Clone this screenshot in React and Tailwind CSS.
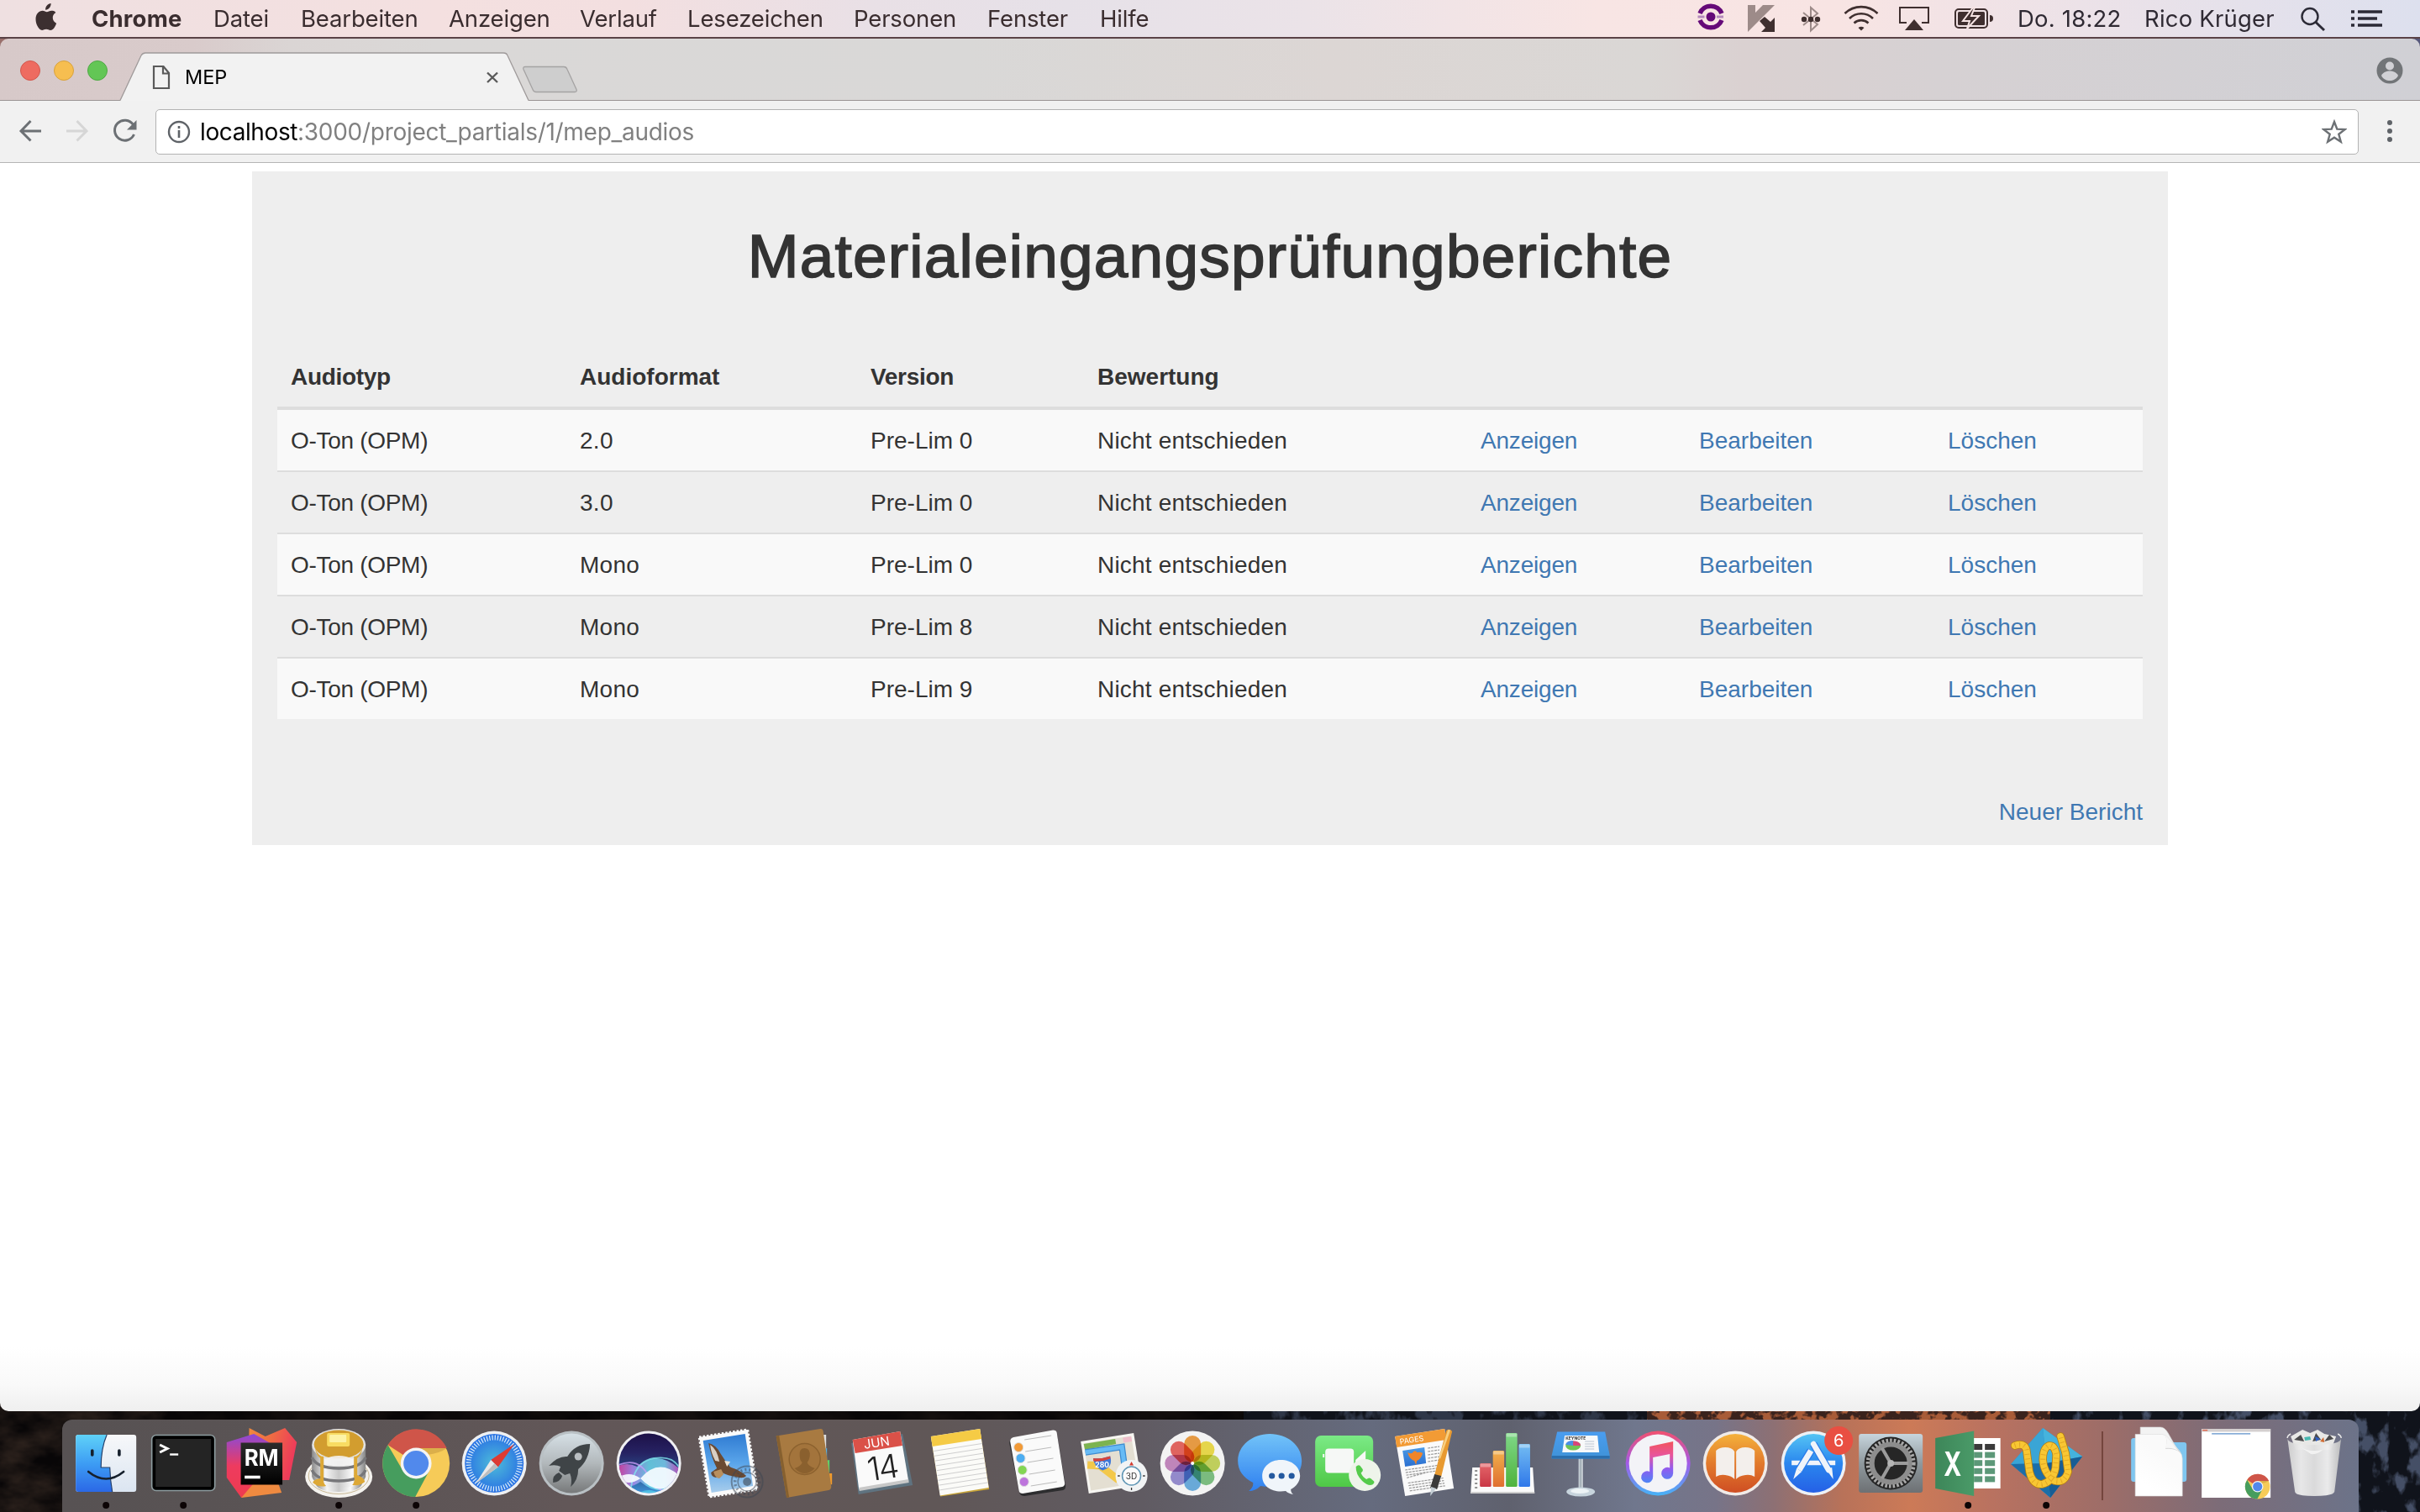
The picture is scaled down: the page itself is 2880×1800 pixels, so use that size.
import React from "react";

const INTER = "font-['Inter','Noto_Sans',sans-serif]";

/* ---------- menu bar ---------- */

const menuItems = [
  ["Datei", "w-[104px]"],
  ["Bearbeiten", "w-[176px]"],
  ["Anzeigen", "w-[156px]"],
  ["Verlauf", "w-[128px]"],
  ["Lesezeichen", "w-[198px]"],
  ["Personen", "w-[159px]"],
  ["Fenster", "w-[134px]"],
  ["Hilfe", "w-[80px]"],
];

function AppleLogo() {
  return (
    <svg className="h-[32px] w-[26px]" viewBox="0 0 26 32">
      <path
        fill="#3c2f30"
        d="M18.6 0c.2 2-.6 3.9-1.7 5.300-1.200 1.500-3 2.500-4.800 2.400-.2-1.900.7-3.900 1.800-5.200C15.100 1.100 17 .1 18.600 0zM24.300 10.900c-.2.100-3.600 2.100-3.500 6.200 0 4.900 4.200 6.500 4.300 6.600 0 .1-.7 2.400-2.200 4.700-1.400 2-2.800 3.500-4.900 3.500-2 0-2.700-1.200-5-1.200s-3.100 1.200-5 1.200c-2 0-3.500-1.800-4.900-3.800C1.300 25.500.500 21.700.500 18.600c0-6 4-9.800 8.100-9.800 2.100 0 3.900 1.400 5.200 1.400 1.200 0 3.200-1.500 5.600-1.500.9 0 4.100.1 4.900 2.200z"
      />
    </svg>
  );
}

function StatusIcons() {
  return (
    <svg className="h-[44px] w-[380px]" viewBox="2000 0 380 44">
      <g fill="none" stroke="#650a78" strokeWidth="5.500">
        <path d="M2023 16a14 14 0 0 1 26 0M2023 24a14 14 0 0 0 26 0" />
      </g>
      <circle cx="2036" cy="20" r="5.500" fill="#650a78" />
      <path d="M2020.500 20h8M2043 20h8" stroke="#b48abb" strokeWidth="3" />
      <path d="M2080 6h9v9l9-9h14l-32 32z" fill="#9d8b89" />
      <path d="M2094 25l6-5 7 6 5-5v17h-16l5-5z" fill="#3f2f2f" />
      <path d="M2146 15l17 14-8 7.500V9l8 7-17 14" fill="none" stroke="#9d8b89" strokeWidth="2" />
      <g fill="#3f2f2f">
        <circle cx="2147" cy="23" r="3.200" />
        <circle cx="2155" cy="23" r="3.200" />
        <circle cx="2163" cy="23" r="3.200" />
      </g>
      <g fill="none" stroke="#3f2f2f" strokeWidth="2.600">
        <path d="M2195.500 16a28 28 0 0 1 39 0" />
        <path d="M2201 22a20 20 0 0 1 28 0" />
        <path d="M2206.500 27.500a12.500 12.500 0 0 1 17 0" />
      </g>
      <path d="M2211.500 33a5 4 0 0 1 7 0l-3.500 3.500z" fill="#3f2f2f" />
      <path d="M2269 27h-8V9h34v18h-8" fill="none" stroke="#3f2f2f" strokeWidth="2" />
      <path d="M2278 23l11 13h-22z" fill="#3f2f2f" />
      <rect x="2327" y="11" width="38" height="22" rx="4" fill="none" stroke="#3f2f2f" strokeWidth="2" />
      <rect x="2330" y="14" width="32" height="16" rx="1.500" fill="#3f2f2f" />
      <path d="M2368 18q4 0 4 4t-4 4z" fill="#3f2f2f" />
      <path d="M2348 9l-12 16h8l-3 9 14-15h-9l4-10z" fill="#3f2f2f" stroke="#f6e4e4" strokeWidth="2" />
    </svg>
  );
}

function MenuBar() {
  return (
    <div
      className={`flex h-[46px] items-center border-b-2 border-[#5a4246] bg-[linear-gradient(90deg,#efe0e1_0%,#f4e0e0_18%,#f3dfe0_26%,#e9e0e6_36%,#e6e1e8_44%,#ebe3e8_54%,#f8e5e4_66%,#f8e4e3_76%,#ece2e8_86%,#dde0ee_100%)] pl-[42px] text-[27.5px] text-[#3a2d2f] ${INTER}`}
    >
      <div className="flex h-full w-[67px] items-start pt-[4px]">
        <AppleLogo />
      </div>
      <div className="w-[145px] whitespace-nowrap pt-px font-bold tracking-[0.2px]">Chrome</div>
      {menuItems.map(([label, width]) => (
        <div key={label} className={`shrink-0 whitespace-nowrap pt-px tracking-[-0.15px] ${width}`}>
          {label}
        </div>
      ))}
      <div className="flex-1" />
      <StatusIcons />
      <div className="w-[151px] shrink-0 whitespace-nowrap pl-[21px] pt-px tracking-[0.2px] text-[#2f2a33]">
        <span className="whitespace-nowrap">Do. 18:22</span>
      </div>
      <div className="w-[188px] shrink-0 whitespace-nowrap pl-[21px] pt-px tracking-[0.2px] text-[#2f2a33]">Rico Krüger</div>
      <svg className="h-[44px] w-[161px] shrink-0" viewBox="2719 0 161 44">
        <circle cx="2749" cy="19.500" r="9.500" fill="none" stroke="#2b2a36" strokeWidth="2.400" />
        <path d="M2756 26.500l10 9.500" stroke="#2b2a36" strokeWidth="3" />
        <path
          d="M2798 14h4M2798 22h4M2798 30h4M2806 14h29M2806 22h23M2806 30h29"
          stroke="#2b2a36"
          strokeWidth="3.600"
        />
      </svg>
    </div>
  );
}

/* ---------- browser chrome ---------- */

function TabStrip() {
  return (
    <div className="bg-[linear-gradient(90deg,#9a706c_0%,#55343a_10%,#55343a_90%,#56587c_100%)]">
      <div className="relative flex h-[74px] items-start rounded-t-[10px] bg-[linear-gradient(90deg,#d7c9c9_0%,#d9cbcb_8%,#dad5d4_12%,#dad8d7_18%,#d9d8d7_40%,#dcd6d4_55%,#dad7d5_68%,#dad1d1_72%,#d6d1d3_80%,#d0d0d5_100%)] shadow-[inset_0_-1px_0_#9a9494]">
        <svg className="h-[74px] w-[700px]" viewBox="0 46 700 74">
          <circle cx="36" cy="84" r="11.500" fill="#ee6b60" stroke="#d2574d" />
          <circle cx="76" cy="84" r="11.500" fill="#f6be50" stroke="#d8a23c" />
          <circle cx="116" cy="84" r="11.500" fill="#63c655" stroke="#4fa845" />
          <path d="M143 120L168 66q2-3 5-3h426q4 0 5 3l25 54z" fill="#f2f2f2" />
          <path d="M143 119.500L168 66q2-3 5-3h426q4 0 5 3l25 53.500" fill="none" stroke="#9f9a9a" strokeWidth="1.300" />
          <path d="M183 79h11.500l6.500 8v18h-18zM194 79v8.500h7" fill="none" stroke="#5a5a5a" strokeWidth="2.200" />
          <path d="M580 86.500l12 11.500M592 86.500L580 98" stroke="#5a5a5a" strokeWidth="2.400" />
          <path d="M625 79.500h46q3 0 4 3l11 24q1 3-2 3h-46q-3 0-4-3l-11-24q-1-3 2-3z" fill="#cecece" stroke="#a5a3a3" strokeWidth="1.300" />
          <text x="220" y="99.500" fontSize="23.500" letterSpacing="-0.1" fill="#000" fontFamily="Inter, sans-serif">
            MEP
          </text>
        </svg>
        <div className="flex-1" />
        <svg className="mr-[20px] mt-[22px] h-[32px] w-[32px]" viewBox="0 0 32 32">
          <circle cx="16" cy="16" r="15.500" fill="#727578" />
          <circle cx="16" cy="10.500" r="5" fill="#d1d1d5" />
          <path d="M6 22c2-4 6-5.500 10-5.500s8 1.500 10 5.500c-2 4-6 6-10 6s-8-2-10-6z" fill="#d1d1d5" />
        </svg>
      </div>
    </div>
  );
}

function Toolbar() {
  return (
    <div className="flex h-[74px] items-center border-b border-[#b5b5b5] bg-[#f1f1f1]">
      <svg className="h-[74px] w-[185px] shrink-0" viewBox="0 120 185 74">
        <path d="M49 156H25M36.500 144L25 156l11.500 11.500" fill="none" stroke="#6c7074" strokeWidth="3" />
        <path d="M79 156h24M91.500 144L103 156l-11.500 11.500" fill="none" stroke="#d6d6d6" strokeWidth="3" />
        <path d="M158.500 148.500a12 12 0 1 0 1 11.500" fill="none" stroke="#6c7074" strokeWidth="3" />
        <path d="M162.500 143v11.500H151z" fill="#6c7074" />
      </svg>
      <div
        className={`flex h-[54px] flex-1 items-center rounded-[5px] border border-[#b3b3b3] bg-white text-[28px] leading-[34px] text-[#808080] ${INTER}`}
      >
        <svg className="ml-[13px] h-[28px] w-[28px] shrink-0" viewBox="0 0 28 28">
          <circle cx="14" cy="14" r="12" fill="none" stroke="#5f6368" strokeWidth="2.400" />
          <path d="M14 12v9M14 7v3" stroke="#5f6368" strokeWidth="2.600" />
        </svg>
        <div className="ml-[11px] whitespace-nowrap tracking-[-0.28px]">
          <span className="tracking-[-0.4px] text-black">localhost</span>:3000/project_partials/1/mep_audios
        </div>
        <div className="flex-1" />
        <svg className="mr-[13px] h-[30px] w-[30px]" viewBox="0 0 30 30">
          <path
            d="M15 3l3.300 8.600 9.200.5-7.200 5.700 2.500 9-7.800-5.100-7.800 5.100 2.500-9-7.200-5.700 9.200-.5z"
            fill="none"
            stroke="#6c7074"
            strokeWidth="2.400"
          />
        </svg>
      </div>
      <svg className="h-[74px] w-[73px] shrink-0" viewBox="2807 120 73 74">
        <circle cx="2844" cy="146" r="3" fill="#5f6368" />
        <circle cx="2844" cy="156" r="3" fill="#5f6368" />
        <circle cx="2844" cy="166" r="3" fill="#5f6368" />
      </svg>
    </div>
  );
}

/* ---------- page ---------- */

const rows = [
  ["2.0", "Pre-Lim 0"],
  ["3.0", "Pre-Lim 0"],
  ["Mono", "Pre-Lim 0"],
  ["Mono", "Pre-Lim 8"],
  ["Mono", "Pre-Lim 9"],
];

const columns = "grid grid-cols-[344px_346px_270px_456px_260px_296px_248px]";

function Report() {
  return (
    <div className="mx-auto mt-[9px] h-[802px] w-[2280px] bg-[#eeeeee] px-[30px] font-['Liberation_Sans',Arial,sans-serif] text-[28px] leading-[40px] text-[#333333]">
      <h1 className="pt-[61px] text-center text-[73px] leading-[80px] tracking-[1.2px] [-webkit-text-stroke:1.6px_#333]">
        Materialeingangsprüfungberichte
      </h1>
      <div className={`mt-[67px] h-[76px] border-b-4 border-[#dddddd] pt-[17px] font-bold ${columns}`}>
        <div className="pl-[16px] tracking-[-0.3px]">Audiotyp</div>
        <div className="pl-[16px]">Audioformat</div>
        <div className="pl-[16px] tracking-[-0.3px]">Version</div>
        <div className="pl-[16px]">Bewertung</div>
      </div>
      <div className="flex flex-col gap-[2px] bg-[#dddddd]">
        {rows.map(([format, version], i) => (
          <div key={i} className={`h-[72px] pt-[17px] ${columns} ${i % 2 === 0 ? "bg-[#f9f9f9]" : "bg-[#eeeeee]"}`}>
            <div className="pl-[16px] tracking-[-0.3px]">O-Ton (OPM)</div>
            <div className="pl-[16px] tracking-[0.3px]">{format}</div>
            <div className="pl-[16px]">{version}</div>
            <div className="pl-[16px] tracking-[0.2px]">Nicht entschieden</div>
            <a className="pl-[16px] tracking-[-0.2px] text-[#4078b2]">Anzeigen</a>
            <a className="pl-[16px] text-[#4078b2]">Bearbeiten</a>
            <a className="pl-[16px] text-[#4078b2]">Löschen</a>
          </div>
        ))}
      </div>
      <div className="pt-[91px] text-right text-[#4078b2]">Neuer Bericht</div>
    </div>
  );
}

/* ---------- dock icons ---------- */

function Grad({ id, stops, x2 = 0, y2 = 1 }) {
  return (
    <linearGradient id={id} x1="0" y1="0" x2={x2} y2={y2}>
      {stops.map((c, i) => (
        <stop key={i} offset={i / (stops.length - 1)} stopColor={c} />
      ))}
    </linearGradient>
  );
}

const sans = "Inter, sans-serif";

const Finder = () => (
  <>
    <Grad id="fi1" stops={["#5fd2f8", "#3d9df4", "#2b68e6"]} />
    <Grad id="fi2" stops={["#f7f8fa", "#dbe5f1"]} />
    <rect x="10" y="18" width="72" height="68" rx="3" fill="url(#fi2)" />
    <path d="M13 18H47Q40 34 40 57H50.500Q51 72 53.500 86H13a3 3 0 0 1-3-3V21a3 3 0 0 1 3-3z" fill="url(#fi1)" />
    <path d="M47 18Q40 34 40 57H50.500Q51 72 53.500 86" fill="none" stroke="#24406b" strokeWidth="1.200" />
    <path d="M29.600 37v5M61.700 37v5" stroke="#16202c" strokeWidth="3.600" strokeLinecap="round" />
    <path d="M25 62q21 17 42 0" fill="none" stroke="#16202c" strokeWidth="2.600" strokeLinecap="round" />
  </>
);

const Terminal = () => (
  <>
    <rect x="8.500" y="18.500" width="75" height="66" rx="5" fill="#000" stroke="#8d9c9f" strokeWidth="1.600" />
    <rect x="13" y="23" width="66" height="57" fill="#242424" />
    <path d="M18 30l9 4.500-9 4.500" fill="none" stroke="#fff" strokeWidth="3" />
    <path d="M30 41.500h10" stroke="#fff" strokeWidth="2.400" />
  </>
);

const RubyMine = () => (
  <>
    <Grad id="rm1" stops={["#8a4ad8", "#ee3b5f", "#ee3b4f"]} />
    <Grad id="rm2" x2={1} y2={0.3} stops={["#f08a3c", "#ee6a44", "#ee3b5a"]} />
    <Grad id="rm3" stops={["#2b2b2b", "#000"]} />
    <path d="M31.400 10L50.600 20 74 10 88 27 79 72H60L31 30z" fill="url(#rm2)" />
    <path d="M4.600 27L37 17 60 30V80L22 93 4.600 69z" fill="url(#rm1)" />
    <path d="M22 93L40 72 66 76 70 87z" fill="#ef8a40" />
    <rect x="21.400" y="27.500" width="49.500" height="50" fill="url(#rm3)" />
    <text x="25.500" y="54.500" fontSize="27.500" fontWeight="700" fill="#fff" textLength="41" lengthAdjust="spacingAndGlyphs" fontFamily={sans}>
      RM
    </text>
    <path d="M26 68.500h18.500" stroke="#fff" strokeWidth="3.600" />
  </>
);

const Pancakes = () => (
  <>
    <Grad id="pc1" x2={1} y2={0} stops={["#8b8b8b", "#f5f5f5", "#c9c9c9", "#fafafa", "#858585"]} />
    <ellipse cx="46" cy="68" rx="40" ry="25" fill="#f4f2ee" />
    <ellipse cx="46" cy="67" rx="36" ry="21.500" fill="none" stroke="#c9b894" strokeWidth="1" />
    <path d="M18 62v12q0 12 28 12t28-12V62z" fill="url(#pc1)" />
    <path d="M14 30v38q4 13 32 13t32-13V30z" fill="url(#pc1)" />
    <path d="M14 45q6 13 32 13t32-13M14 60q6 13 32 13t32-13" fill="none" stroke="#77777a" strokeWidth="3.400" />
    <ellipse cx="46" cy="30" rx="32" ry="19" fill="#e2e2e2" />
    <ellipse cx="46" cy="29.500" rx="29.500" ry="17" fill="#d29d2f" />
    <path d="M18 35q4 9 10 9v28q-2 4-4 0V46q-5-4-6-11zM74 35q-4 9-10 9v24q2 4 4 0V46q5-4 6-11z" fill="#dda836" />
    <path d="M24 70q-8 1-9 5 7 6 16 4-4-3-3-9zM68 66q8 3 9 8-5 5-15 4 4-4 2-12z" fill="#dda836" />
    <path d="M29 47q8-4 17-4t17 4v5q-17 7-34 0z" fill="#f3f3f3" opacity=".9" />
    <rect x="32" y="16" width="27" height="16" rx="2" fill="#f8dc62" />
    <rect x="35" y="18" width="20" height="9" rx="1" fill="#fdf3a6" />
  </>
);

const ChromeBall = () => (
  <>
    <circle cx="46" cy="52" r="40" fill="#f6cb58" />
    <path d="M46 52L12.500 30.200A40 40 0 0 1 82.500 34H46z" fill="#cf5549" />
    <path d="M12.500 30.200A40 40 0 0 0 45 92L61.600 61 30.400 61z" fill="#469d5e" />
    <path d="M46 34h36.500q-8 6-24 8z" fill="#8d5a20" opacity=".25" />
    <circle cx="46" cy="52" r="18.400" fill="#f4f4f4" />
    <circle cx="46" cy="52" r="15" fill="#5189ec" />
  </>
);

const Safari = () => (
  <>
    <radialGradient id="sf">
      <stop offset="0" stopColor="#4dbcd9" />
      <stop offset="1" stopColor="#2a72e4" />
    </radialGradient>
    <circle cx="46" cy="52" r="38.500" fill="#eef0f2" />
    <circle cx="46" cy="52" r="35" fill="url(#sf)" />
    <circle cx="46" cy="52" r="30.500" fill="none" stroke="#d8ebfb" strokeWidth="6" strokeDasharray="1.200 2" />
    <path d="M70 29L50.500 56.500 42 48z" fill="#dd3b33" />
    <path d="M24 76L42 48l8.500 8.500z" fill="#e9e9e9" />
    <path d="M24 76l22.300-23.700 4.200 4.200z" fill="#bdbdbd" />
  </>
);

const Launchpad = () => (
  <>
    <Grad id="lp" stops={["#d6e0e6", "#b2b8bb", "#77797a"]} />
    <circle cx="46" cy="52" r="38.500" fill="#b9c0c4" />
    <circle cx="46" cy="52" r="35.500" fill="url(#lp)" />
    <path
      fill="#3f4447"
      d="M68 29q-18 0-27 15-11-1-22 11 8-2 14 1l-2 5 7 5 6-2q3 7 1 16 9-8 9-21 13-11 14-30z"
    />
    <circle cx="54" cy="44" r="4.500" fill="#b9bec1" />
    <path d="M31 63q-8 3-7 12 9-1 11-8z" fill="#3f4447" />
  </>
);

const Siri = () => (
  <>
    <Grad id="si1" stops={["#1c0f45", "#262262", "#2a4f8a", "#3f9be0"]} />
    <Grad id="si2" x2={1} y2={0} stops={["#f03a9c", "#b58af0", "#6fe0ee", "#7fd8f5", "#e03fc0"]} />
    <clipPath id="sic">
      <circle cx="46" cy="52" r="35.500" />
    </clipPath>
    <circle cx="46" cy="52" r="38.500" fill="#f0f0f3" />
    <g clipPath="url(#sic)">
      <rect x="8" y="14" width="76" height="76" fill="url(#si1)" />
      <path d="M8 56Q20 50 32 56 56 34 84 60V76Q60 94 36 74 22 84 8 76z" fill="url(#si2)" opacity=".8" />
      <path d="M24 90Q26 50 52 46T84 62" fill="none" stroke="#7fe6ee" strokeWidth="1.800" opacity=".8" />
      <path d="M10 54Q34 44 46 68T84 84" fill="none" stroke="#c79cf7" strokeWidth="1.800" opacity=".8" />
      <path d="M8 70Q22 60 36 70 58 44 84 68 60 96 36 70 22 80 8 70z" fill="#f6fcff" opacity=".92" />
      <path d="M30 90q16-12 32 0z" fill="#5fe0f0" opacity=".6" />
    </g>
  </>
);

const Mail = () => (
  <>
    <Grad id="ml" stops={["#2f7bd2", "#5aa5ea", "#a8cdec"]} />
    <path d="M13 21L70.500 12 82 83 25 92z" fill="#fafafa" stroke="#fafafa" strokeWidth="3" strokeDasharray="2.500 2" />
    <path d="M17.500 25L67.500 17 77 79 27.500 87z" fill="url(#ml)" />
    <path d="M24 28q9 2 14 12l6 9 4 2q-1 4 3 6 10 3 18 10-4 4-12 1-10-1-17-5l-7 6q-6-1-6-6l7-5q-7-14-10-30z" fill="#6b4a32" />
    <path d="M26 30q8 5 11 20l-5-1q-5-9-6-19z" fill="#d9cfc4" />
    <path d="M43 49l7 1-4 6z" fill="#f0e6d6" />
    <path d="M30 62l9-3 3 6-5 5q-5 0-7-8z" fill="#b98f5e" />
    <g fill="none" stroke="#3d4652" opacity=".5">
      <circle cx="70" cy="74" r="18.500" strokeWidth="2" />
      <circle cx="70" cy="74" r="11" strokeWidth="1.500" />
      <circle cx="70" cy="74" r="14.500" strokeWidth="3.500" strokeDasharray="2 3" />
    </g>
    <circle cx="70" cy="74" r="5" fill="#3d4652" opacity=".6" />
  </>
);

const Contacts = () => (
  <>
    <path d="M66 18h6v17h-6z" fill="#dedede" />
    <path d="M69 35l4-1v15l-4 1z" fill="#53b4ea" />
    <path d="M71 49l5-1v15l-5 1z" fill="#5fd46a" />
    <path d="M73 64h6v13l-6 2z" fill="#f09a2c" />
    <path d="M12.500 19.500L65 11q3-.5 3.500 3L78 79q.5 4-3 5L25 93z" fill="#a87a41" />
    <path d="M12.500 19.500L16 19 28 92.500 25 93z" fill="#86602f" />
    <circle cx="46.500" cy="47" r="18.500" fill="#a3743c" stroke="#8c622f" strokeWidth="1.500" />
    <path d="M46.500 34q7 0 6 10-1 5-3 7 1 4 9 7-12 12-24 0 8-3 9-7-3-3-3-8-1-9 6-9z" fill="#8a602e" />
  </>
);

const Calendar = () => (
  <>
    <path d="M10 28L71 17 83 78 18.500 89z" fill="#5f7380" />
    <path d="M11.600 24L68 14 78 73 19 83z" fill="#fafafa" />
    <path d="M11.600 24L68 14 70.800 31 14.500 40z" fill="#da5148" />
    <path d="M19 81l59-10 .5 4L19.500 85z" fill="#c8c8c8" />
    <g transform="rotate(-9 46 52)" fontFamily={sans} textAnchor="middle">
      <text x="44" y="32" fontSize="15" fill="#fff">
        JUN
      </text>
      <text x="46" y="71" fontSize="39" fontWeight="300" letterSpacing="-2" fill="#222">
        14
      </text>
    </g>
  </>
);

const NotesIcon = () => (
  <>
    <path d="M11.700 21L70 11.500 81 83 23 91.500z" fill="#c9a63a" />
    <path d="M11.700 20L70 11 80.500 81 22.500 90.500z" fill="#fbfbf8" />
    <path d="M11.700 20L70 11 72 23 13.500 32z" fill="#f5cb45" />
    <g stroke="#cfcfcf" strokeWidth="1">
      {[0, 1, 2, 3, 4, 5, 6, 7, 8].map((i) => (
        <path key={i} d={`M${15 + i * 0.9} ${37.500 + i * 5.800}l57.500-9`} />
      ))}
    </g>
  </>
);

const Reminders = () => (
  <>
    <path d="M17 23L65 15q4 0 5 4l10 60q0 4-3 5L31 91q-5 0-6-4L13 28q0-4 4-5z" fill="#2d2d2f" />
    <path d="M18 21L65 12.500q4 0 4.500 3L79 76q0 3-3 4L29 88q-4 0-4.500-3L14 26q0-4 4-5z" fill="#fafafa" />
    {[
      [24, 33, "#f29a37"],
      [26.400, 46, "#4daef2"],
      [28.500, 60, "#83d653"],
      [30.600, 74, "#bd75dc"],
    ].map(([x, y, c]) => (
      <g key={c}>
        <circle cx={x} cy={y} r="5.500" fill={c} stroke="#ddd" />
        <path d={`M${x + 8} ${y + 5}l31-5`} stroke="#bbb" />
      </g>
    ))}
    <path d="M31 24l32-5" stroke="#bbb" />
  </>
);

const Maps = () => (
  <>
    <path d="M6 26L69 16 79 78 15.600 88z" fill="#f7f6f2" />
    <path d="M9.500 28.500L66 19.500 75.500 75 18 84.500z" fill="#e4dfd2" />
    <path d="M9.500 29L47 23l1 6L11 36z" fill="#7cb350" />
    <path d="M56 21.500l10-1.600 1 6-10 1.600z" fill="#efbecb" />
    <path d="M11.500 39L55 32.500 59 62" fill="none" stroke="#3e8cd0" strokeWidth="7.500" />
    <path d="M11.500 39L55 32.500 59 62" fill="none" stroke="#67bbf5" strokeWidth="5" />
    <path d="M14 54l15 1 22 17" fill="none" stroke="#f3c84b" strokeWidth="9" />
    <path d="M21 46q10 1 20-2.500 4 13-9 17-10-3-11-14.500z" fill="#3f79d8" />
    <path d="M21 46q10 1 20-2.500l.3 3q-10 4-20.300 3z" fill="#d5443c" />
    <text x="31.500" y="57" textAnchor="middle" fontSize="8.500" fontWeight="700" fill="#fff" fontFamily={sans}>
      280
    </text>
    <circle cx="66.400" cy="67" r="19" fill="#f1f3f4" />
    <circle cx="66.400" cy="67" r="11" fill="#fbfbfb" stroke="#5e95b4" strokeWidth="1.500" />
    <path d="M66.400 50l2.500 4.500h-5z" fill="#d23b30" />
    <path d="M66.400 81v3M50 67h2.500M80 67h2.500" stroke="#333" strokeWidth="1.300" />
    <text x="66.400" y="70.700" textAnchor="middle" fontSize="10" fill="#333" fontFamily={sans}>
      3D
    </text>
  </>
);

const petals = ["#f0952d", "#f0dc35", "#c2d44a", "#6fbc74", "#5aa8e0", "#8c82cf", "#c27cbb", "#e8544e"];

const Photos = () => (
  <>
    <circle cx="46" cy="52" r="38.500" fill="#f3f3f3" />
    {petals.map((c, i) => (
      <rect
        key={c}
        x="36"
        y="19"
        width="20"
        height="32"
        rx="10"
        fill={c}
        opacity=".88"
        className="mix-blend-multiply"
        transform={`rotate(${i * 45} 46 52)`}
      />
    ))}
    <circle cx="46" cy="52" r="2" fill="#fff" />
  </>
);

const Messages = () => (
  <>
    <Grad id="ms" stops={["#72c3f8", "#2f80f0"]} />
    <path d="M46 17c21 0 38 14 38 32S67 80 46 80q-6 0-11-1-6 6-14 6 6-5 5-10Q8 66 8 49C8 31 25 17 46 17z" fill="url(#ms)" />
    <path d="M59 48c13 0 23 8 23 19 0 7-5 13-11 16q0 4 3 6-6-1-9-4l-6 .5c-12 0-22-7-22-18s9-19.500 22-19.500z" fill="#f0f5fa" />
    <circle cx="48.500" cy="67" r="3.600" fill="#24599f" />
    <circle cx="60" cy="67" r="3.600" fill="#24599f" />
    <circle cx="72" cy="67" r="3.600" fill="#24599f" />
  </>
);

const FaceTime = () => (
  <>
    <Grad id="ft" stops={["#7bea86", "#4fc846"]} />
    <rect x="7" y="19" width="69" height="61" rx="7" fill="url(#ft)" />
    <rect x="19" y="34.500" width="34" height="29" rx="4" fill="#f6f8f6" />
    <path d="M55 48l12-11v15H55z" fill="#f6f8f6" />
    <path d="M17 41v4" stroke="#f6f8f6" strokeWidth="2" />
    <circle cx="66" cy="66" r="19" fill="#eef4ea" />
    <path
      d="M55.500 56q3-3 5-1l3 4q1 2-2 4.500 2 5 6.500 7.500 3-2.500 5-1l4 3.500q1 2-2 4-5 2-12-4.500-8-8-7.500-17z"
      fill="#55cb4b"
    />
  </>
);

const PagesIcon = () => (
  <>
    <Grad id="pg" stops={["#4d9be6", "#2a6fd0"]} />
    <path d="M10 20L69 11 80 82 22 91z" fill="#fafafa" />
    <path d="M10 20L69 11 71 24 12 33z" fill="#f29b35" />
    <text x="16" y="29.500" fontSize="9" fill="#fff" transform="rotate(-9 16 29)" fontFamily={sans}>
      PAGES
    </text>
    <path d="M19 37l26-4 2 19-25 4z" fill="url(#pg)" />
    <path d="M25 39q5 3 7-1 3-2 4 1 4-1 7 1-2 7-7 9l-1 5-2-5q-6-2-8-10z" fill="#f0852a" />
    <g stroke="#9a9a9a" strokeWidth="1.200" strokeDasharray="3 1">
      {[0, 1, 2, 3, 4].map((i) => (
        <path key={i} d={`M49 ${34 + i * 4}l14-2`} />
      ))}
      {[0, 1, 2, 3, 5, 6, 7, 8].map((i) => (
        <path key={i} d={`M${22 + i * 0.7} ${60 + i * 3.100}l${i === 3 ? 22 : 42}-6`} />
      ))}
    </g>
    <path d="M71 13q4-3 7 1L65 68l-8-2z" fill="#e89a30" />
    <path d="M73 12l3 .5-12 34-2-.5z" fill="#f8cf80" />
    <path d="M57 65l8 2-5 16-8-2z" fill="#3a3a3a" />
    <path d="M53 80l6 2-7 9z" fill="#c5cfd6" />
  </>
);

const Numbers = () => (
  <>
    <path d="M10 57h72l2 31H8z" fill="#fafafa" />
    <path d="M8 86h76v2H8z" fill="#cfcfcf" />
    {[61, 66, 71, 76, 81].map((y) => (
      <path key={y} d={`M13 ${y}h3`} stroke="#777" strokeWidth="1.600" />
    ))}
    <Grad id="nm1" stops={["#e4666a", "#c93745"]} />
    <Grad id="nm2" stops={["#f1b04b", "#e06f30"]} />
    <Grad id="nm3" stops={["#7fd888", "#4fb33d"]} />
    <Grad id="nm4" stops={["#74bdf2", "#2f78ea"]} />
    <rect x="19" y="52" width="13.500" height="28" rx="1.500" fill="url(#nm1)" />
    <rect x="34.500" y="37" width="13.500" height="43" rx="1.500" fill="url(#nm2)" />
    <rect x="50" y="16" width="13.500" height="64" rx="1.500" fill="url(#nm3)" />
    <rect x="65.300" y="29" width="13.500" height="51" rx="1.500" fill="url(#nm4)" />
    <path d="M19.500 54.500h12.500M35 39.500h12.500M50.500 18.500h12.500M65.800 31.500h12.500" stroke="#fff" strokeWidth="4" opacity=".35" />
  </>
);

const Keynote = () => (
  <>
    <Grad id="kn" stops={["#4a9df0", "#3f93d8"]} />
    <Grad id="kn2" x2={1} y2={0} stops={["#d8e0e6", "#9aa6ae", "#e8edf0"]} />
    <rect x="43.500" y="44" width="5" height="40" fill="url(#kn2)" />
    <ellipse cx="46" cy="86" rx="17" ry="5.500" fill="#c7d4dd" />
    <ellipse cx="45" cy="85" rx="11" ry="3" fill="#edf3f6" />
    <path d="M18 14.500h57l5.500 28v4h-69v-4z" fill="url(#kn)" />
    <path d="M11.500 43h69v3.500h-69z" fill="#2b6fae" />
    <path d="M27 19h39l2 20H24z" fill="#f8f9fa" />
    <text x="28" y="23.500" fontSize="5" fontWeight="700" fill="#333" fontFamily={sans}>
      KEYNOTE
    </text>
    <ellipse cx="37" cy="31" rx="9" ry="5.500" fill="#6fc455" />
    <path d="M37 31l-9-1q1-5 9-5z" fill="#4a8ee8" />
    <path d="M37 31v-5.500q8 0 9 5.500z" fill="#d8447a" />
    <path d="M51 26h11M51 29h11M51 32h11M51 35h11" stroke="#b9c3d0" strokeWidth="1.200" />
  </>
);

const ITunes = () => (
  <>
    <Grad id="it1" stops={["#f2506e", "#a35be8", "#45b4f7"]} />
    <Grad id="it2" stops={["#f2545c", "#e8549c", "#8f5cf0", "#4d86f5"]} />
    <circle cx="46" cy="52" r="38.500" fill="url(#it1)" />
    <circle cx="46" cy="52" r="34.500" fill="#f3f3f7" />
    <path d="M36 32l28-6v38a7 7 0 1 1-4-6.500V41l-20 4v23a7 7 0 1 1-4-6z" fill="url(#it2)" />
  </>
);

const IBooks = () => (
  <>
    <Grad id="ib" stops={["#f4b13b", "#e27a2c", "#cf4e23"]} />
    <circle cx="46" cy="52" r="38.500" fill="#f0ebe8" />
    <circle cx="46" cy="52" r="35" fill="url(#ib)" />
    <path
      d="M45 38q-3-5-11-5-7 0-11 4v31q5-3 11-2 8 1 11 5zM47 38q3-5 11-5 7 0 11 4v31q-5-3-11-2-8 1-11 5z"
      fill="#f3efec"
    />
  </>
);

const AppStore = () => (
  <>
    <Grad id="as" stops={["#55c4f4", "#2a86ee", "#2560e6"]} />
    <circle cx="46" cy="52" r="38.500" fill="#eef1f5" />
    <circle cx="46" cy="52" r="35" fill="url(#as)" />
    <path d="M20 51.500h52" stroke="#f0f4fa" strokeWidth="5.500" />
    <path d="M43 37L29 60" stroke="#2a7bea" strokeWidth="9.500" />
    <path d="M43 37L29 60" stroke="#f0f4fa" strokeWidth="7" />
    <path d="M26 58l6 4-10 9z" fill="#f0f4fa" />
    <path d="M46 29L64 60" stroke="#2a7bea" strokeWidth="9" />
    <path d="M46 29L64 60" stroke="#f0f4fa" strokeWidth="6.500" strokeLinecap="round" />
    <path d="M61 59l7-2 1.500 14z" fill="#f0f4fa" />
    <circle cx="76" cy="25" r="17" fill="#e94f42" />
    <text x="76" y="32" textAnchor="middle" fontSize="20" fill="#fff" fontFamily={sans}>
      6
    </text>
  </>
);

const Preferences = () => (
  <>
    <Grad id="pf" stops={["#c7d5dd", "#8f999e", "#6d7073"]} />
    <rect x="8" y="17" width="76" height="70" rx="3" fill="url(#pf)" />
    <circle cx="46" cy="52" r="31.500" fill="#262626" />
    <circle cx="46" cy="52" r="27" fill="none" stroke="#a9a9a9" strokeWidth="5" strokeDasharray="2.600 2.055" />
    <circle cx="46" cy="52" r="22.500" fill="none" stroke="#8d8d8d" strokeWidth="6" />
    <g stroke="#9b9b9b" strokeWidth="4">
      <path d="M46 52h21M46 52L35.500 33.800M46 52L35.500 70.200" />
    </g>
    <circle cx="46" cy="52" r="4" fill="#b5b5b5" />
  </>
);

const Excel = () => (
  <>
    <Grad id="xl" x2={1} y2={0} stops={["#3d8659", "#4a9a68"]} />
    <rect x="50" y="22" width="34.500" height="60" fill="#fff" />
    {[0, 1, 2, 3, 4].map((i) => (
      <g key={i} fill={i === 0 ? "#3b3b3b" : "#5c9878"}>
        <rect x="53" y={29 + i * 9.600} width="10" height="7" />
        <rect x="66" y={29 + i * 9.600} width="12" height="7" />
      </g>
    ))}
    <path d="M7 22L53 13.500V91L7 82z" fill="url(#xl)" />
    <text x="17" y="67" fontSize="40" fontWeight="700" fill="#fff" textLength="21" lengthAdjust="spacingAndGlyphs" fontFamily={sans}>
      X
    </text>
  </>
);

const ropePath =
  "M8.500 31Q20 27 22.500 36L26 62Q30 78 41 77 54 74 57 58L58 42Q56 30 49 31 42 34 42 48 43 64 56 73 68 76 72 62L69 40 63 20";

const Rope = () => (
  <>
    <path d="M42 10L89 44 51 93 4 53z" fill="#2e8fc4" />
    <path d="M42 10L89 44 46 52z" fill="#45b3dd" />
    <path d="M42 10L4 53 46 52z" fill="#3aa5d6" />
    <path d="M4 53L51 93 46 52z" fill="#1c6ea8" />
    <path d="M89 44L51 93 46 52z" fill="#175d94" />
    <path d={ropePath} fill="none" stroke="#b57f12" strokeWidth="9.500" strokeLinecap="round" />
    <path d={ropePath} fill="none" stroke="#f8c733" strokeWidth="7.800" strokeLinecap="round" />
    <path d={ropePath} fill="none" stroke="#e3a824" strokeWidth="6" strokeDasharray="1 4.500" />
  </>
);

const Downloads = () => (
  <>
    <Grad id="dl" x2={-0.6} y2={1} stops={["#fafafa", "#fff", "#fff"]} />
    <path d="M16 22h10l3 5h47q3 0 3 3v41q0 3-3 3H16q-3 0-3-3V25q0-3 3-3z" fill="#7fc6f0" />
    <path d="M24 9h24q5 0 9 7l13 23H24z" fill="#f3f3f3" stroke="#d5d5d5" strokeWidth=".6" />
    <path d="M18 17.500h32q4 0 8 5l12 14q4 5 4 10V91H18z" fill="url(#dl)" stroke="#dcdcdc" strokeWidth=".6" />
    <path d="M53 19q4 4 1 16 10-1 17 4 3 3 3 7-1-8-8-13z" fill="#d4d4d4" />
    <path d="M53 18q4 6 1 16 9-1 16 4z" fill="#f7f7f7" />
  </>
);

const WindowThumb = () => (
  <>
    <rect x="5" y="11" width="82" height="82" fill="#fff" />
    <rect x="5" y="11" width="82" height="3.500" fill="#d4cfcf" />
    <path d="M6 12.700h6" stroke="#e06a50" strokeWidth="1.500" />
    <path d="M17 16.800h46" stroke="#5d8fc9" strokeWidth="1.300" />
    <g transform="translate(54.500 60.500) scale(.37)">
      <ChromeBall />
    </g>
  </>
);

const Trash = () => (
  <>
    <Grad id="tr" x2={1} y2={0} stops={["#d0d0d0", "#ececec", "#dedede", "#efefef", "#bebebe"]} />
    <path d="M18 20l14-8 9 4 9-4 8 5 14 3-6 16H24z" fill="#e8e8e6" />
    <path d="M22 24l8-6 4 8zM44 26l4-10 6 8zM58 26l6-8 5 5z" fill="#4b4b4d" />
    <path d="M34 21l7-1 1 4-7 1z" fill="#49b8b0" />
    <path d="M47 20l6 3-5 3z" fill="#2f60c4" />
    <path d="M53 26l4-5 1 6z" fill="#d0692f" />
    <path d="M14 22q0 8 32 8t32-8l-8 64q-2 5-24 5t-23-5z" fill="url(#tr)" opacity=".96" />
    <path d="M14 22q0-3 4-5M78 22q0-3-4-5" fill="none" stroke="#e8e8e8" strokeWidth="1.500" />
    <path d="M30 33q10 6 26 3-6 6-14 5z" fill="#f6f6f6" opacity=".8" />
  </>
);

const apps = [
  [Finder, true],
  [Terminal, true],
  [RubyMine],
  [Pancakes, true],
  [ChromeBall, true],
  [Safari],
  [Launchpad],
  [Siri],
  [Mail],
  [Contacts],
  [Calendar],
  [NotesIcon],
  [Reminders],
  [Maps],
  [Photos],
  [Messages],
  [FaceTime],
  [PagesIcon],
  [Numbers],
  [Keynote],
  [ITunes],
  [IBooks],
  [AppStore],
  [Preferences],
  [Excel, true],
  [Rope, true],
];

function DockCell({ icon: Icon, running }) {
  return (
    <svg className="h-[110px] w-[92.350px] shrink-0 overflow-visible" viewBox="0 0 92 110">
      <Icon />
      {running && <circle cx="46" cy="102" r="4" fill="#0c0405" />}
    </svg>
  );
}

function Rocks() {
  return (
    <svg className="absolute inset-0 h-[130px] w-[2880px]" viewBox="0 0 2880 130">
      <filter id="rockDark" x="0" y="0" width="1" height="1" colorInterpolationFilters="sRGB">
        <feTurbulence type="fractalNoise" baseFrequency="0.02 0.035" numOctaves="4" seed="7" />
        <feColorMatrix values="0 0 0 0 .17  0 0 0 0 .13  0 0 0 0 .11  2 0 0 0 -.6" />
      </filter>
      <filter id="rockBlue" x="0" y="0" width="1" height="1" colorInterpolationFilters="sRGB">
        <feTurbulence type="fractalNoise" baseFrequency="0.045 0.03" numOctaves="4" seed="4" />
        <feColorMatrix values="0 0 0 0 .27  0 0 0 0 .31  0 0 0 0 .4  7 0 0 0 -3.700" />
      </filter>
      <filter id="rockFire" x="0" y="0" width="1" height="1" colorInterpolationFilters="sRGB">
        <feTurbulence type="fractalNoise" baseFrequency="0.08 0.09" numOctaves="3" seed="9" />
        <feColorMatrix values="0 0 0 0 .66  0 0 0 0 .36  0 0 0 0 .22  8 0 0 0 -3.800" />
      </filter>
      <rect width="2880" height="130" fill="#080607" />
      <rect x="1480" width="1400" height="130" fill="#10131b" />
      <rect width="200" height="130" filter="url(#rockDark)" />
      <rect x="200" width="1280" height="22" filter="url(#rockDark)" opacity=".35" />
      <rect x="1480" width="520" height="22" filter="url(#rockBlue)" opacity=".6" />
      <rect x="1960" width="480" height="22" fill="#3a231d" />
      <rect x="1960" width="480" height="22" filter="url(#rockFire)" />
      <rect x="2440" width="440" height="130" filter="url(#rockBlue)" />
    </svg>
  );
}

function DesktopBottom() {
  return (
    <div className="relative h-[130px] w-full overflow-hidden">
      <Rocks />
      <div className="relative h-[10px]" />
      <div className="relative ml-[74px] mt-[10px] flex h-[110px] w-[2733px] rounded-t-[12px] bg-[linear-gradient(90deg,#575253_0%,#5b5455_12%,#625758_22%,#605757_38%,#605b62_47%,#656b7e_57%,#5f616e_63%,#70778d_68.500%,#777488_72%,#8d7074_74.500%,#b87259_77.500%,#cc7a57_80.500%,#b97260_84%,#9d6d68_89%,#7c6c78_94%,#6c7389_100%)] pl-[6px]">
        {apps.map(([icon, running], i) => (
          <DockCell key={i} icon={icon} running={running} />
        ))}
        <div className="flex w-[42px] shrink-0 justify-center pt-[14px]">
          <div className="h-[82px] w-[2px] bg-[#74453d]" />
        </div>
        <DockCell icon={Downloads} />
        <DockCell icon={WindowThumb} />
        <DockCell icon={Trash} />
      </div>
    </div>
  );
}

export default function App() {
  return (
    <div className="flex h-[1800px] w-[2880px] flex-col overflow-hidden bg-[#080607]">
      <MenuBar />
      <TabStrip />
      <Toolbar />
      <div className="relative z-10 h-[1486px] shrink-0 rounded-b-[10px] bg-white bg-[linear-gradient(180deg,#fff_0,#fff_1410px,#f9f9f9_1455px,#efefef_1486px)] pt-px">
        <Report />
      </div>
      <div className="-mt-[10px] shrink-0">
        <DesktopBottom />
      </div>
    </div>
  );
}
